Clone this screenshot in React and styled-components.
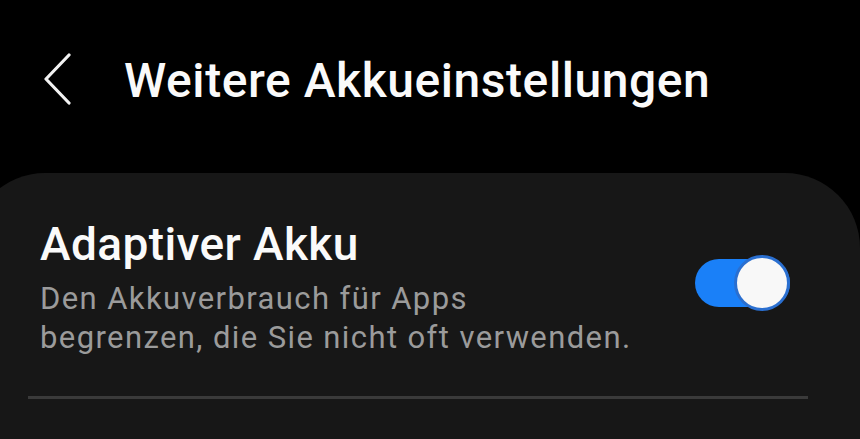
import React from 'react';
import styled, { createGlobalStyle } from 'styled-components';

const GlobalStyle = createGlobalStyle`
    html, body {
        margin: 0;
        padding: 0;
        background: #000;
        overflow: hidden;
    }
    body {
        font-family: Roboto, "Noto Sans", sans-serif;
    }
`;

const Screen = styled.div`
    width: 860px;
    height: 439px;
    background: #000;
    display: flex;
    flex-direction: column;
    overflow: hidden;
`;

const Header = styled.header`
    height: 173px;
    flex-shrink: 0;
    display: flex;
    align-items: flex-start;
    padding: 53px 0 0 42px;
    box-sizing: border-box;
    gap: 46px;
`;

const BackButton = styled.button`
    width: 36px;
    height: 52px;
    padding: 0;
    border: none;
    background: none;
    display: flex;
    align-items: center;
    justify-content: center;
    cursor: pointer;
`;

const Title = styled.h1`
    margin: 0;
    color: #fafafa;
    font-size: 48px;
    font-weight: 500;
    line-height: 56px;
    letter-spacing: 0.55px;
`;

const Card = styled.section`
    flex: 1;
    margin: 0 0 0 -30px;
    padding: 0 70px 0 70px;
    background: #171717;
    border-radius: 75px 75px 0 0;
`;

const Row = styled.div`
    display: flex;
    align-items: flex-start;
    justify-content: space-between;
    padding: 44px 0 0;
    height: 223px;
    box-sizing: border-box;
`;

const TextBlock = styled.div`
    display: flex;
    flex-direction: column;
`;

const RowTitle = styled.div`
    color: #fafafa;
    font-size: 46px;
    line-height: 54px;
    font-weight: 500;
    letter-spacing: 0.4px;
`;

const RowSummary = styled.div`
    margin-top: 8px;
    color: #9b9b9b;
    font-size: 31px;
    line-height: 39px;
    letter-spacing: 1.4px;
`;

const Switch = styled.div`
    position: relative;
    flex-shrink: 0;
    width: 95px;
    height: 48px;
    margin-top: 42px;
    border-radius: 24px;
    background: ${p => (p.$on ? '#1a80f8' : '#555')};
`;

const Knob = styled.span`
    position: absolute;
    top: -4px;
    right: 0;
    width: 50px;
    height: 50px;
    border-radius: 50%;
    background: #f8f8f8;
    border: 3px solid #2a6fd0;
`;

const Divider = styled.hr`
    margin: 0 0 0 -12px;
    width: 780px;
    height: 3px;
    border: none;
    background: #3a3a3a;
`;

const ChevronIcon = () => (
    <svg width="36" height="52" viewBox="0 0 36 52" fill="none">
        <path d="M27 2 L4 26 L27 50" stroke="#f2f2f2" strokeWidth="3.2" strokeLinecap="round" strokeLinejoin="round" />
    </svg>
);

const App = () => {
    return (
        <Screen>
            <GlobalStyle />
            <Header>
                <BackButton aria-label="Zurück">
                    <ChevronIcon />
                </BackButton>
                <Title>Weitere Akkueinstellungen</Title>
            </Header>
            <Card>
                <Row>
                    <TextBlock>
                        <RowTitle>Adaptiver Akku</RowTitle>
                        <RowSummary>
                            Den Akkuverbrauch für Apps<br />
                            begrenzen, die Sie nicht oft verwenden.
                        </RowSummary>
                    </TextBlock>
                    <Switch $on>
                        <Knob />
                    </Switch>
                </Row>
                <Divider />
            </Card>
        </Screen>
    );
};

export default App;
